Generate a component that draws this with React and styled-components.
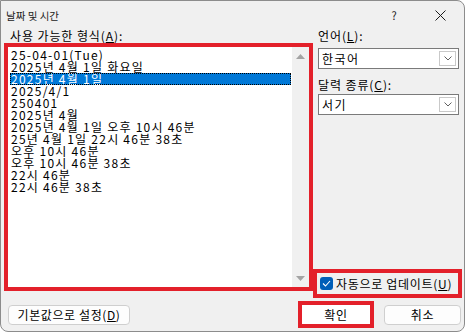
import React from "react";
import styled, { createGlobalStyle } from "styled-components";

const Global = createGlobalStyle`
  html, body { margin: 0; padding: 0; background: #ffffff; }
  body { font-family: "Noto Sans CJK KR", "Noto Sans", sans-serif; }
  * { box-sizing: border-box; }
`;

const RED = "#e3202a";

const Window = styled.div`
  width: 465px;
  height: 332px;
  background: #f0f0f0;
  border: 1px solid #8c8c8c;
  border-radius: 0 8px 8px 8px;
  overflow: hidden;
  display: flex;
  flex-direction: column;
  font-family: "Noto Sans CJK KR", "Noto Sans", sans-serif;
  color: #000;
`;

const TitleBar = styled.div`
  height: 28px;
  display: flex;
  align-items: center;
  padding-left: 5px;
  flex-shrink: 0;
`;

const Title = styled.div`
  font-size: 10.5px;
  line-height: 12px;
  color: #1b1b1b;
  flex: 1;
  padding-top: 1px;
`;

const TitleButton = styled.div`
  width: ${(p) => p.$w}px;
  height: 28px;
  display: flex;
  align-items: center;
  justify-content: center;
  font-size: 11px;
  color: #1b1b1b;
`;

const Body = styled.div`
  display: grid;
  grid-template-columns: 309px 1fr;
  padding: 0 2px 0 3px;
  height: 269px;
  flex-shrink: 0;
`;

const Column = styled.div`
  display: flex;
  flex-direction: column;
  padding-left: ${(p) => p.$pl || 0}px;
`;

const Label = styled.div`
  font-size: 12px;
  line-height: 14px;
  height: 14px;
  letter-spacing: 0.9px;
  padding-left: ${(p) => p.$pl || 0}px;
  margin-top: ${(p) => p.$mt || 0}px;
  white-space: nowrap;
`;

const U = styled.span`
  text-decoration: underline;
  text-underline-offset: 1px;
`;

const RedFrame = styled.div`
  border: 4px solid ${RED};
  display: flex;
  height: ${(p) => p.$h}px;
  width: ${(p) => (p.$w ? `${p.$w}px` : "auto")};
  align-items: ${(p) => p.$align || "stretch"};
  padding-left: ${(p) => p.$pl || 0}px;
  margin-left: ${(p) => p.$ml || 0}px;
`;

const List = styled.div`
  flex: 1;
  background: #fff;
  padding: 2px 1px 0 2px;
`;

const Item = styled.div`
  font-size: 12px;
  line-height: 12px;
  height: 12px;
  letter-spacing: 1.25px;
  padding-left: 1px;
  white-space: nowrap;
  color: ${(p) => (p.$sel ? "#fff" : "#000")};
  background: ${(p) => (p.$sel ? "#0078d7" : "transparent")};
  outline: ${(p) => (p.$sel ? "1px dotted #000" : "none")};
  outline-offset: -1px;
`;

const ScrollBar = styled.div`
  width: 17px;
  background: #f0f0f0;
  display: flex;
  flex-direction: column;
  justify-content: space-between;
  align-items: center;
  padding: 7px 0 6px;
`;

const Select = styled.div`
  height: 21px;
  margin-top: ${(p) => p.$mt || 0}px;
  width: 141px;
  background: #fff;
  border: 1px solid #7a7a7a;
  display: flex;
  align-items: center;
  padding: 0 2px 0 3px;
  font-size: 12px;
  line-height: 14px;
  letter-spacing: 1.4px;
`;

const SelectText = styled.div`
  flex: 1;
`;

const ArrowBox = styled.div`
  width: 17px;
  height: 15px;
  border: 1px solid #c9c9c9;
  background: #fff;
  display: flex;
  align-items: center;
  justify-content: center;
`;

const Spacer = styled.div`
  flex: 1;
`;

const Check = styled.div`
  width: 13px;
  height: 13px;
  border-radius: 3px;
  background: #005fb8;
  display: flex;
  align-items: center;
  justify-content: center;
  margin-right: 3px;
`;

const CheckText = styled.div`
  font-size: 12px;
  line-height: 14px;
  letter-spacing: 0.7px;
  white-space: nowrap;
`;

const Footer = styled.div`
  height: 27px;
  margin-top: 3px;
  display: flex;
  align-items: center;
  padding: 0 3px 0 7px;
`;

const Button = styled.div`
  width: ${(p) => p.$w}px;
  height: 20px;
  background: #fdfdfd;
  border: 1px solid #cfcfcf;
  border-radius: 4px;
  display: flex;
  align-items: center;
  justify-content: center;
  font-size: 12px;
  line-height: 14px;
  letter-spacing: 0.6px;
  margin-left: ${(p) => p.$ml || 0}px;
  white-space: nowrap;
`;

const OkInner = styled.div`
  flex: 1;
  background: #fff;
  display: flex;
  align-items: center;
  justify-content: center;
  font-size: 12px;
  line-height: 14px;
  letter-spacing: 0.6px;
`;

const items = [
  "25-04-01(Tue)",
  "2025년 4월 1일 화요일",
  "2025년 4월 1일",
  "2025/4/1",
  "250401",
  "2025년 4월",
  "2025년 4월 1일 오후 10시 46분",
  "25년 4월 1일 22시 46분 38초",
  "오후 10시 46분",
  "오후 10시 46분 38초",
  "22시 46분",
  "22시 46분 38초",
];

const Chevron = () => (
  <svg width="8" height="5" viewBox="0 0 8 5">
    <path d="M0.5 0.5 L4 4 L7.5 0.5" fill="none" stroke="#606060" strokeWidth="1" />
  </svg>
);

export default function App() {
  return (
    <>
      <Global />
      <Window>
        <TitleBar>
          <Title>날짜 및 시간</Title>
          <TitleButton $w={44}>?</TitleButton>
          <TitleButton $w={48}>
            <svg width="11" height="11" viewBox="0 0 11 11">
              <path d="M0.5 0.5 L10.5 10.5 M10.5 0.5 L0.5 10.5" stroke="#1b1b1b" strokeWidth="1" />
            </svg>
          </TitleButton>
        </TitleBar>
        <Body>
          <Column>
            <Label $pl={6}>
              사용 가능한 형식(<U>A</U>):
            </Label>
            <RedFrame $h={248}>
              <List>
                {items.map((t, i) => (
                  <Item key={i} $sel={i === 2}>
                    {t}
                  </Item>
                ))}
              </List>
              <ScrollBar>
                <svg width="9" height="5" viewBox="0 0 9 5">
                  <path d="M0 5 L4.5 0 L9 5 Z" fill="#a3a3a3" />
                </svg>
                <svg width="9" height="5" viewBox="0 0 9 5">
                  <path d="M0 0 L4.5 5 L9 0 Z" fill="#a3a3a3" />
                </svg>
              </ScrollBar>
            </RedFrame>
          </Column>
          <Column $pl={5}>
            <Label>
              언어(<U>L</U>):
            </Label>
            <Select $mt={5}>
              <SelectText>한국어</SelectText>
              <ArrowBox>
                <Chevron />
              </ArrowBox>
            </Select>
            <Label $mt={9}>
              달력 종류(<U>C</U>):
            </Label>
            <Select $mt={2}>
              <SelectText>서기</SelectText>
              <ArrowBox>
                <Chevron />
              </ArrowBox>
            </Select>
            <Spacer />
            <RedFrame $h={29} $w={149} $ml={-5} $align="center" $pl={3}>
              <Check>
                <svg width="9" height="7" viewBox="0 0 9 7">
                  <path d="M1 3.5 L3.5 6 L8 1" fill="none" stroke="#fff" strokeWidth="1.1" />
                </svg>
              </Check>
              <CheckText>
                자동으로 업데이트(<U>U</U>)
              </CheckText>
            </RedFrame>
          </Column>
        </Body>
        <Footer>
          <Button $w={122}>
            기본값으로 설정(<U>D</U>)
          </Button>
          <Spacer />
          <RedFrame $h={27} $w={76}>
            <OkInner>확인</OkInner>
          </RedFrame>
          <Button $w={77} $ml={10}>
            취소
          </Button>
        </Footer>
      </Window>
    </>
  );
}
